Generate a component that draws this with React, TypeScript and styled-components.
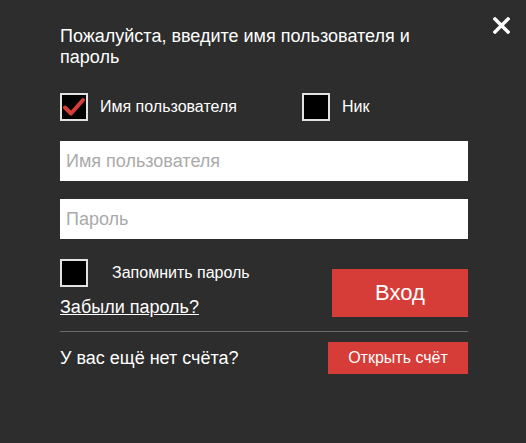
import styled, { createGlobalStyle } from "styled-components";

const GlobalStyle = createGlobalStyle`
  html, body {
    margin: 0;
    padding: 0;
    background: #2d2d2d;
  }
  body {
    font-family: "Liberation Sans", Arial, sans-serif;
    color: #fff;
  }
`;

const Dialog = styled.div`
  position: relative;
  width: 526px;
  height: 443px;
  box-sizing: border-box;
  padding: 26px 58px 0 60px;
  background: #2d2d2d;
`;

const CloseButton = styled.button`
  position: absolute;
  top: 16px;
  right: 16px;
  width: 18px;
  height: 18px;
  padding: 0;
  border: 0;
  background: none;
  cursor: pointer;
  display: flex;
  align-items: center;
  justify-content: center;
`;

const Title = styled.h2`
  margin: 0;
  max-width: 380px;
  font-size: 18px;
  line-height: 21px;
  font-weight: normal;
`;

const ModeRow = styled.div`
  display: flex;
  margin-top: 25px;
  height: 28px;
`;

const CheckLabel = styled.label<{ $gap?: number; $width?: number }>`
  display: flex;
  align-items: center;
  gap: ${(p) => p.$gap ?? 12}px;
  width: ${(p) => (p.$width ? `${p.$width}px` : "auto")};
  font-size: 16px;
  cursor: pointer;
`;

const Box = styled.span`
  width: 28px;
  height: 28px;
  box-sizing: border-box;
  border: 2px solid #e2e2e2;
  background: #000;
  display: flex;
  align-items: center;
  justify-content: center;
  flex-shrink: 0;
`;

const Fields = styled.div`
  display: flex;
  flex-direction: column;
  gap: 18px;
  margin-top: 20px;
`;

const Input = styled.input`
  height: 40px;
  width: 100%;
  box-sizing: border-box;
  border: 0;
  padding: 0 6px;
  font-family: "Liberation Sans", Arial, sans-serif;
  font-size: 18px;
  color: #333;
  background: #fff;
  outline: none;
  &::placeholder {
    color: #aaa;
  }
`;

const LoginRow = styled.div`
  display: flex;
  justify-content: space-between;
  margin-top: 20px;
`;

const LeftCol = styled.div`
  display: flex;
  flex-direction: column;
`;

const ForgotLink = styled.a`
  margin-top: 10px;
  font-size: 18px;
  line-height: 21px;
  color: #fff;
  text-decoration: underline;
`;

const RedButton = styled.button<{ $w: number; $h: number; $size: number }>`
  width: ${(p) => p.$w}px;
  height: ${(p) => p.$h}px;
  border: 0;
  background: #d63d39;
  color: #fff;
  font-family: "Liberation Sans", Arial, sans-serif;
  font-size: ${(p) => p.$size}px;
  cursor: pointer;
`;

const LoginButton = styled(RedButton)`
  margin-top: 10px;
`;

const Divider = styled.hr`
  margin: 13px 0 0;
  border: 0;
  border-top: 1px solid #6a6a6a;
`;

const SignupRow = styled.div`
  display: flex;
  justify-content: space-between;
  align-items: center;
  margin-top: 10px;
  font-size: 18px;
`;

const Check = () => (
  <svg width="24" height="20" viewBox="0 0 24 20">
    <path
      d="M3 10.5 L9 16.5 L21 3"
      fill="none"
      stroke="#d63d39"
      strokeWidth="4"
      strokeLinecap="round"
      strokeLinejoin="round"
    />
  </svg>
);

export default function App() {
  return (
    <>
      <GlobalStyle />
      <Dialog>
        <CloseButton aria-label="Закрыть">
          <svg width="17" height="17" viewBox="0 0 17 17">
            <path d="M2 2 L15 15 M15 2 L2 15" stroke="#fff" strokeWidth="3.4" strokeLinecap="square" />
          </svg>
        </CloseButton>
        <Title>Пожалуйста, введите имя пользователя и пароль</Title>
        <ModeRow>
          <CheckLabel $width={242}>
            <Box>
              <Check />
            </Box>
            Имя пользователя
          </CheckLabel>
          <CheckLabel>
            <Box />
            Ник
          </CheckLabel>
        </ModeRow>
        <Fields>
          <Input placeholder="Имя пользователя" />
          <Input type="password" placeholder="Пароль" />
        </Fields>
        <LoginRow>
          <LeftCol>
            <CheckLabel $gap={24}>
              <Box />
              Запомнить пароль
            </CheckLabel>
            <ForgotLink href="#">Забыли пароль?</ForgotLink>
          </LeftCol>
          <LoginButton $w={136} $h={48} $size={22}>
            Вход
          </LoginButton>
        </LoginRow>
        <Divider />
        <SignupRow>
          <span>У вас ещё нет счёта?</span>
          <RedButton $w={140} $h={32} $size={16}>
            Открыть счёт
          </RedButton>
        </SignupRow>
      </Dialog>
    </>
  );
}
